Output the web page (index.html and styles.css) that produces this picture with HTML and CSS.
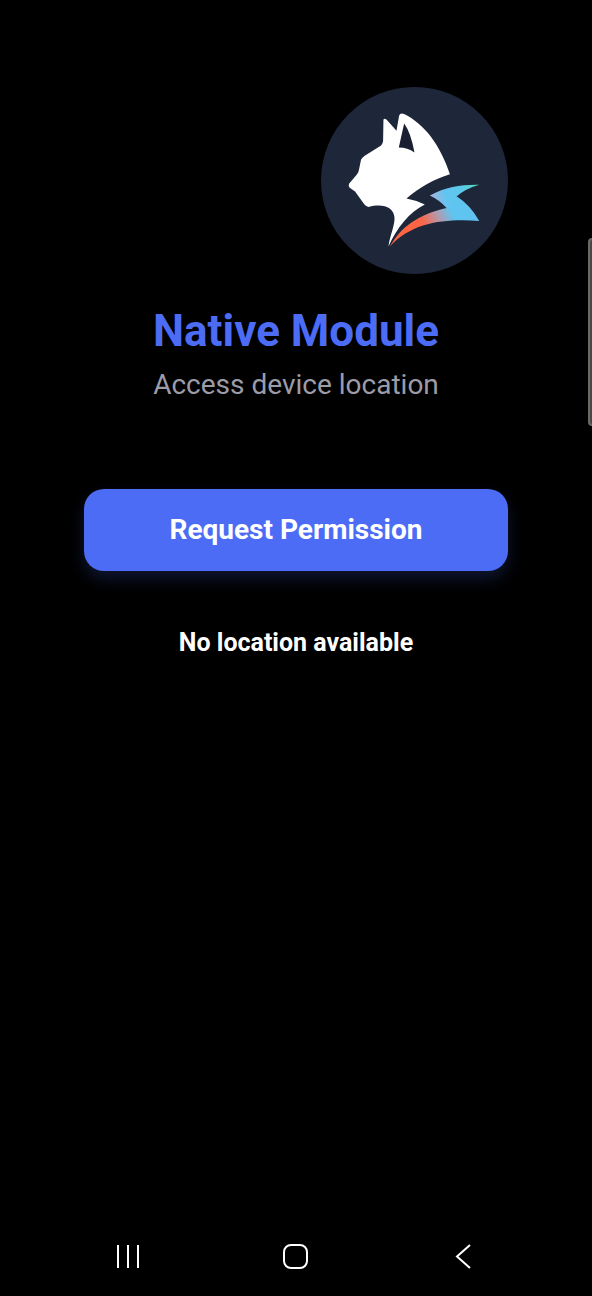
FILE: index.html
```html
<!DOCTYPE html>
<html lang="en">
<head>
<meta charset="utf-8">
<meta name="viewport" content="width=device-width, initial-scale=1">
<title>Native Module</title>
<link rel="stylesheet" href="styles.css">
</head>
<body>
<div class="screen">
  <main class="content">
    <svg class="logo" viewBox="34 22 560 560" role="img" aria-label="Cat logo">
      <defs>
        <linearGradient id="bolt" gradientUnits="userSpaceOnUse" x1="330" y1="440" x2="425" y2="395">
          <stop offset="0" stop-color="#ff6545"/>
          <stop offset="0.15" stop-color="#f4694e"/>
          <stop offset="0.6" stop-color="#b39aae"/>
          <stop offset="1" stop-color="#5fc4f0"/>
        </linearGradient>
        <linearGradient id="tip" gradientUnits="userSpaceOnUse" x1="360" y1="350" x2="508" y2="310">
          <stop offset="0" stop-color="#a8b4dc"/>
          <stop offset="0.3" stop-color="#62c4f0"/>
          <stop offset="0.65" stop-color="#5cc8ea"/>
          <stop offset="1" stop-color="#4fe0b0"/>
        </linearGradient>
      </defs>
      <circle cx="314" cy="302" r="280" fill="#1e263a"/>
      <path fill="#fff" d="M221 120Q223 114 230 119L260 153L268 107Q272 98 283 103C345 134 391 196 420 283C374 297 328 322 290 356Q318 361 345 374C299 397 262 442 236 500C240 468 256 434 254 412C251 383 222 370 176 381Q169 380 164 374L136 335L120 324Q115 318 118 312L142 283Q147 276 148 268L154 239Q158 233 165 228L214 197Q220 191 220 182Z"/>
      <path fill="#1a2032" d="M283 131Q303 158 314 218Q293 203 267 203Z"/>
      <path fill="url(#bolt)" d="M240 500C273 441 324 404 410 384L440 349Q480 374 508 423C405 417 310 425 240 500Z"/>
      <path fill="url(#tip)" d="M360 347C408 321 455 314 508 315Q468 326 440 350L426 390L410 384Q389 361 360 347Z"/>
    </svg>
    <h1 class="title">Native Module</h1>
    <p class="subtitle">Access device location</p>
    <button class="primary" type="button">Request Permission</button>
    <p class="status">No location available</p>
  </main>
  <nav class="navbar" aria-label="System navigation">
    <button class="key" type="button" aria-label="Recent apps">
      <svg class="glyph" viewBox="0 0 28 28"><path d="M4 3v23M14 3v23M24 3v23"/></svg>
    </button>
    <button class="key" type="button" aria-label="Home">
      <svg class="glyph" viewBox="0 0 28 28"><rect x="2" y="3" width="23" height="23" rx="7"/></svg>
    </button>
    <button class="key" type="button" aria-label="Back">
      <svg class="glyph" viewBox="0 0 28 28"><path d="M20 3L7 14.500L20 26"/></svg>
    </button>
  </nav>
  <div class="edge-handle"></div>
</div>
</body>
</html>
```
FILE: styles.css
```css
* {
  box-sizing: border-box;
}

body {
  margin: 0;
  background: #000;
  color: #fff;
  font-family: Roboto, "Liberation Sans", sans-serif;
}

.screen {
  position: relative;
  display: flex;
  flex-direction: column;
  min-height: 100vh;
  overflow: hidden;
}

.content {
  flex: 1;
  display: flex;
  flex-direction: column;
  padding: 87px 84px 0;
  text-align: center;
}

.logo {
  align-self: flex-end;
  width: 187px;
  height: 187px;
}

.title {
  margin: 31px 0 0;
  color: #4c6cf6;
  font-size: 44px;
  line-height: 52px;
  font-weight: 700;
}

.subtitle {
  margin: 12px 0 0;
  color: #9c9ca8;
  font-size: 28px;
  line-height: 32px;
}

.primary {
  margin: 88px 0 0;
  padding: 24px;
  border: 0;
  border-radius: 20px;
  background: #4c6cf6;
  box-shadow: 0 8px 16px rgba(76, 108, 246, 0.2);
  color: #fff;
  font: inherit;
  font-size: 28px;
  line-height: 34px;
  font-weight: 700;
}

.status {
  margin: 56px 0 0;
  font-size: 25px;
  line-height: 32px;
  font-weight: 700;
}

.navbar {
  display: grid;
  grid-template-columns: repeat(3, 1fr);
  padding: 0 44px;
}

.key {
  display: flex;
  align-items: center;
  justify-content: center;
  height: 80px;
  padding: 0;
  border: 0;
  background: none;
}

.glyph {
  width: 28px;
  height: 28px;
  fill: none;
  stroke: #fff;
  stroke-width: 2;
}

.edge-handle {
  position: absolute;
  top: 238px;
  right: -4px;
  width: 8px;
  height: 188px;
  border: 2px solid #6a6a68;
  border-radius: 4px;
  background: #484844;
}
```
